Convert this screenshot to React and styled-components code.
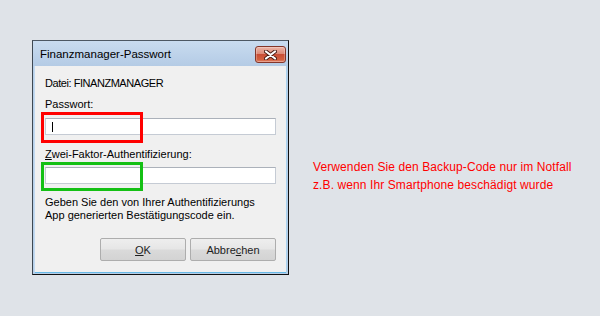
import styled, { createGlobalStyle } from "styled-components";

const GlobalStyle = createGlobalStyle`
  html, body {
    margin: 0;
    padding: 0;
  }

  body {
    background: #dfe3e8;
    font-family: "Liberation Sans", Arial, sans-serif;
  }
`;

const Page = styled.div`
  width: 600px;
  height: 316px;
  box-sizing: border-box;
  padding: 40px 0 0 32px;
  display: flex;
  align-items: flex-start;
  background: #dfe3e8;
  overflow: hidden;
`;

const Window = styled.div`
  width: 257px;
  height: 235px;
  box-sizing: border-box;
  display: flex;
  flex-direction: column;
  border: 1px solid #111;
  border-top-color: #4d5864;
  border-left-color: #3e4852;
  background: #b7cfe8;
`;

const TitleBar = styled.div`
  height: 25px;
  flex: none;
  display: flex;
  align-items: flex-start;
  justify-content: space-between;
  padding: 0 2px 0 7px;
  background: linear-gradient(#c9dcf0, #b4cbe5);
`;

const Title = styled.span`
  font-size: 11.5px;
  line-height: 25px;
  padding-top: 1px;
  color: #000;
`;

const CloseButton = styled.div`
  width: 31px;
  height: 17px;
  box-sizing: border-box;
  margin-top: 5px;
  border: 1px solid #84362a;
  border-radius: 3px;
  background: linear-gradient(#ecb5a8 0%, #dc8a77 45%, #c94d35 50%, #d2603f 85%, #e48b72 100%);
  box-shadow: inset 0 0 0 1px rgba(255, 255, 255, 0.25);
  display: flex;
  align-items: center;
  justify-content: center;
`;

const Client = styled.div`
  flex: 1;
  margin: 0 2px 2px;
  padding: 11px 10px 0;
  background: #f0f0f0;
  box-shadow: 0 1px 0 #67b9e6, 1px 0 0 #a9d2ee, -1px 0 0 #c2daf1;
  display: flex;
  flex-direction: column;
  font-size: 11px;
  color: #000;
`;

const Line = styled.div`
  line-height: 13px;
  margin-top: ${(p) => p.$gap || 0}px;
  letter-spacing: ${(p) => (p.$tight ? "-0.45px" : "normal")};
  white-space: nowrap;
`;

const Field = styled.div`
  position: relative;
  margin-top: ${(p) => p.$gap || 0}px;
`;

const TextBox = styled.div`
  height: 17px;
  box-sizing: border-box;
  background: #fff;
  border: 1px solid #c5cbd4;
  border-top-color: #abb1ba;
  display: flex;
  align-items: center;
  padding-left: 6px;
`;

const Caret = styled.span`
  width: 1px;
  height: 10px;
  background: #000;
`;

const Highlight = styled.div`
  position: absolute;
  left: -4px;
  top: ${(p) => p.$top}px;
  width: 102px;
  height: ${(p) => p.$height}px;
  box-sizing: border-box;
  border: 3px solid ${(p) => p.$color};
`;

const ButtonRow = styled.div`
  margin-top: 16px;
  display: flex;
  justify-content: flex-end;
  gap: 4px;
`;

const Button = styled.div`
  width: 86px;
  height: 23px;
  box-sizing: border-box;
  border: 1px solid #adadad;
  border-radius: 2px;
  background: linear-gradient(#eeeeee 0%, #e6e6e6 48%, #dadada 52%, #d3d3d3 100%);
  display: flex;
  align-items: center;
  justify-content: center;
  font-size: 11px;
  color: #1e1e1e;
`;

const Key = styled.span`
  text-decoration: underline;
`;

const Note = styled.div`
  margin: 118px 0 0 24px;
  font-size: 12px;
  letter-spacing: 0.1px;
  line-height: 18px;
  color: #ff0000;
  white-space: nowrap;
`;

const CloseIcon = () => (
  <svg width="13" height="10" viewBox="0 0 13 10">
    <path d="M2 1.5 L11 8.5 M11 1.5 L2 8.5" stroke="#4a1c14" strokeWidth="4" strokeLinecap="round" />
    <path d="M2 1.5 L11 8.5 M11 1.5 L2 8.5" stroke="#fff" strokeWidth="2.2" strokeLinecap="round" />
  </svg>
);

export default function App() {
  return (
    <>
      <GlobalStyle />
      <Page>
        <Window>
          <TitleBar>
            <Title>Finanzmanager-Passwort</Title>
            <CloseButton>
              <CloseIcon />
            </CloseButton>
          </TitleBar>
          <Client>
            <Line $tight>Datei: FINANZMANAGER</Line>
            <Line $gap={8}>Passwort:</Line>
            <Field $gap={7}>
              <TextBox>
                <Caret />
              </TextBox>
              <Highlight $color="#ff0000" $top={-6} $height={31} />
            </Field>
            <Line $gap={13}>
              <Key>Z</Key>wei-Faktor-Authentifizierung:
            </Line>
            <Field $gap={6}>
              <TextBox />
              <Highlight $color="#14c014" $top={-5} $height={29} />
            </Field>
            <Line $gap={12}>
              Geben Sie den von Ihrer Authentifizierungs
              <br />
              App generierten Bestätigungscode ein.
            </Line>
            <ButtonRow>
              <Button>
                <Key>O</Key>K
              </Button>
              <Button>
                Abbre<Key>c</Key>hen
              </Button>
            </ButtonRow>
          </Client>
        </Window>
        <Note>
          Verwenden Sie den Backup-Code nur im Notfall
          <br />
          z.B. wenn Ihr Smartphone beschädigt wurde
        </Note>
      </Page>
    </>
  );
}
